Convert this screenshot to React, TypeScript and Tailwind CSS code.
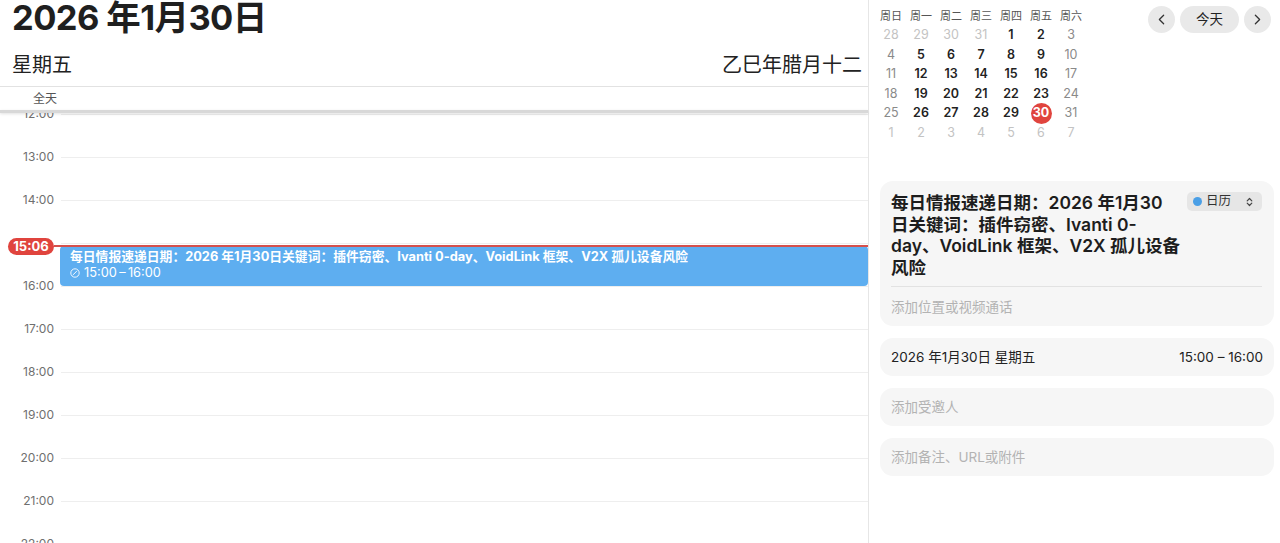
import { ChevronLeft, ChevronRight } from "lucide-react";

const HOURS = ["12:00", "13:00", "14:00", "", "16:00", "17:00", "18:00", "19:00", "20:00", "21:00", "22:00"];

const WEEKDAYS = ["周日", "周一", "周二", "周三", "周四", "周五", "周六"];

type Day = { n: number; kind: "out" | "end" | "in" | "today" };

function buildMonth(): Day[][] {
  const cells: Day[] = [];
  [28, 29, 30, 31].forEach((n) => cells.push({ n, kind: "out" }));
  for (let d = 1; d <= 31; d++) {
    const col = cells.length % 7;
    const weekend = col === 0 || col === 6;
    cells.push({ n: d, kind: d === 30 ? "today" : weekend ? "end" : "in" });
  }
  for (let d = 1; d <= 7; d++) cells.push({ n: d, kind: "out" });
  const rows: Day[][] = [];
  for (let i = 0; i < 6; i++) rows.push(cells.slice(i * 7, i * 7 + 7));
  return rows;
}

const DAY_STYLE = {
  out: "text-[#c3c3c3]",
  end: "text-[#8a8a8a]",
  in: "text-[#222] font-semibold",
  today: "",
};

function MiniCalendar() {
  const rows = buildMonth();
  return (
    <div className="pl-[7px] pt-[6px]">
      <div className="flex h-[20px] items-center">
        {WEEKDAYS.map((w) => (
          <span key={w} className="w-[30px] text-center text-[11px] text-[#555]">
            {w}
          </span>
        ))}
      </div>
      {rows.map((row, i) => (
        <div key={i} className="flex h-[19.5px] items-center">
          {row.map((d, j) => (
            <span key={j} className={`flex w-[30px] justify-center text-[12.5px] ${DAY_STYLE[d.kind]}`}>
              {d.kind === "today" ? (
                <span className="flex h-[21px] w-[21px] items-center justify-center rounded-full bg-[#e0443e] font-bold text-white">
                  {d.n}
                </span>
              ) : (
                d.n
              )}
            </span>
          ))}
        </div>
      ))}
    </div>
  );
}

function ClockIcon() {
  return (
    <svg width="10" height="10" viewBox="0 0 10 10" fill="none" stroke="white" strokeWidth="0.9">
      <circle cx="5" cy="5" r="4.2" />
      <path d="M3.2 6.6 L5 5 L6.6 3.2" strokeLinecap="round" />
    </svg>
  );
}

function UpDown() {
  return (
    <svg width="7" height="10" viewBox="0 0 7 10" fill="none" stroke="#444" strokeWidth="1.2" strokeLinecap="round" strokeLinejoin="round">
      <path d="M1.2 3.8 L3.5 1.5 L5.8 3.8" />
      <path d="M1.2 6.2 L3.5 8.5 L5.8 6.2" />
    </svg>
  );
}

export default function App() {
  return (
    <div className="flex h-[543px] w-[1280px] overflow-hidden bg-white font-['Inter','Noto_Sans_CJK_SC',sans-serif] text-[#1f1f1f]">
      {/* day view */}
      <main className="flex w-[869px] shrink-0 flex-col border-r border-[#e6e6e6]">
        <header className="h-[87px] shrink-0 border-b border-[#e2e2e2]">
          <h1 className="h-[36px] pl-[12px] text-[34.5px] font-bold leading-[36px] tracking-[-0.6px]">2026 年1月30日</h1>
          <div className="mt-[15px] flex h-[28px] items-center justify-between pl-[12px] pr-[6px] text-[20px] leading-[28px] text-[#222]">
            <span>星期五</span>
            <span>乙巳年腊月十二</span>
          </div>
        </header>
        <div className="flex h-[23px] shrink-0 items-center pl-[33px] text-[12px] text-[#555]">全天</div>
        <div className="relative z-10 h-[3px] shrink-0 bg-[#d8d8d8] shadow-[0_1px_3px_rgba(0,0,0,0.12)]" />

        <div className="relative flex-1 overflow-hidden">
          <div className="mt-[-20.5px]">
            {HOURS.map((h, i) => (
              <div key={i} className="flex h-[43px] items-center">
                <span className="w-[54px] text-right text-[12px] text-[#6f6f6f]">{h}</span>
                <div className="ml-[7px] h-px flex-1 bg-[#eeeeee]" />
              </div>
            ))}
          </div>

          {/* event block */}
          <div className="absolute left-[60px] right-0 top-[133px] h-[40px] rounded-[4px] bg-[#5eaef0] pl-[10px] pt-[2.5px] text-white">
            <div className="text-[12.8px] font-bold leading-[16.5px]">
              每日情报速递日期：2026 年1月30日关键词：插件窃密、Ivanti 0-day、VoidLink 框架、V2X 孤儿设备风险
            </div>
            <div className="flex items-center gap-[4px] text-[12.8px] leading-[16.5px]">
              <ClockIcon />
              <span>15:00{"\u2009–\u2009"}16:00</span>
            </div>
          </div>

          {/* now indicator */}
          <div className="absolute left-[54px] right-0 top-[132px] h-[1.5px] bg-[#d5504c]" />
          <div className="absolute left-[8px] top-[125px] flex h-[17px] w-[46px] items-center justify-center rounded-full bg-[#e0443e] text-[13px] font-bold text-white">
            15:06
          </div>
        </div>
      </main>

      {/* inspector */}
      <aside className="flex flex-1 flex-col">
        <div className="flex items-start justify-between">
          <MiniCalendar />
          <div className="flex gap-[5px] pr-[9px] pt-[6px]">
            <button className="flex h-[27px] w-[27px] items-center justify-center rounded-full bg-[#e9e9e9] text-[#333]">
              <ChevronLeft size={17} strokeWidth={1.8} />
            </button>
            <button className="h-[27px] w-[59px] rounded-full bg-[#e9e9e9] text-[13.5px] text-[#222]">今天</button>
            <button className="flex h-[27px] w-[27px] items-center justify-center rounded-full bg-[#e9e9e9] text-[#333]">
              <ChevronRight size={17} strokeWidth={1.8} />
            </button>
          </div>
        </div>

        <div className="mt-[38px] flex flex-col gap-[12px] pl-[11px] pr-[6px]">
          <section className="rounded-[13px] bg-[#f6f6f6] pb-[9px] pl-[11px] pr-[12px] pt-[11px]">
            <div className="flex items-start justify-between">
              <h2 className="text-[17.5px] font-semibold leading-[21.7px] text-[#1d1d1d]">
                <span className="block whitespace-nowrap">每日情报速递日期：2026 年1月30</span>
                <span className="block whitespace-nowrap">日关键词：插件窃密、Ivanti 0-</span>
                <span className="block whitespace-nowrap">day、VoidLink 框架、V2X 孤儿设备</span>
                <span className="block whitespace-nowrap">风险</span>
              </h2>
              <div className="flex h-[19px] w-[75px] shrink-0 items-center rounded-[5px] bg-[#e6e6e6] pl-[6px] pr-[9px]">
                <span className="h-[9px] w-[9px] rounded-full bg-[#4a9fe6]" />
                <span className="ml-[4px] text-[12.5px] leading-none text-[#333]">日历</span>
                <span className="ml-auto flex">
                  <UpDown />
                </span>
              </div>
            </div>
            <div className="mt-[7px] h-px bg-[#e2e2e2]" />
            <div className="pt-[10px] text-[13.5px] leading-[20px] text-[#b3b3b3]">添加位置或视频通话</div>
          </section>

          <section className="flex h-[38px] items-center justify-between rounded-[13px] bg-[#f6f6f6] px-[11px] text-[13.5px] text-[#222]">
            <span>2026 年1月30日 星期五</span>
            <span>15:00 – 16:00</span>
          </section>
          <section className="flex h-[38px] items-center rounded-[13px] bg-[#f6f6f6] px-[11px] text-[13.5px] text-[#b3b3b3]">
            添加受邀人
          </section>
          <section className="flex h-[38px] items-center rounded-[13px] bg-[#f6f6f6] px-[11px] text-[13.5px] text-[#b3b3b3]">
            添加备注、URL或附件
          </section>
        </div>
      </aside>
    </div>
  );
}
